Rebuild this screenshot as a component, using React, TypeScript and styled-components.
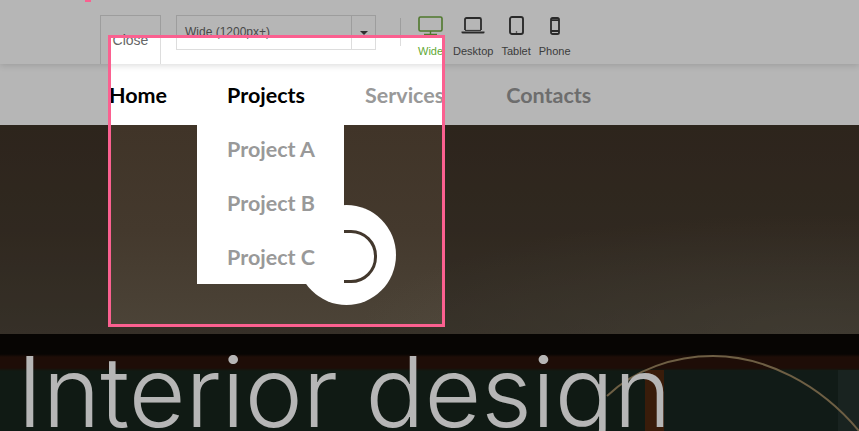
import { FC } from "react";
import styled, { createGlobalStyle } from "styled-components";

const GlobalStyle = createGlobalStyle`
  html, body {
    margin: 0;
    padding: 0;
    height: 100%;
    overflow: hidden;
    background: #fff;
  }
`;

const Page = styled.div`
  position: relative;
  display: flex;
  flex-direction: column;
  width: 859px;
  height: 431px;
  overflow: hidden;
`;

const Toolbar = styled.div`
  position: relative;
  z-index: 3;
  display: flex;
  align-items: flex-start;
  flex: 0 0 64px;
  padding-left: 100px;
  box-sizing: border-box;
  background: #fff;
  box-shadow: 0 1px 7px rgba(0, 0, 0, 0.16);
  font-family: "Liberation Sans", Arial, sans-serif;
`;

const CloseBtn = styled.button`
  width: 61px;
  height: 49px;
  margin: 15px 15px 0 0;
  padding: 0 0 1px;
  border: 1px solid #ddd;
  border-bottom: none;
  background: transparent;
  color: #666;
  font: 14px "Liberation Sans", Arial, sans-serif;
`;

const SizeSelect = styled.div`
  display: flex;
  width: 200px;
  height: 35px;
  margin-top: 15px;
  box-sizing: border-box;
  border: 1px solid #ddd;
`;

const SizeValue = styled.div`
  flex: 1;
  padding: 9px 0 0 8px;
  color: #666;
  font-size: 12px;
  line-height: 14px;
`;

const SizeArrow = styled.div`
  display: flex;
  align-items: center;
  justify-content: center;
  flex: 0 0 23px;
  border-left: 1px solid #ddd;

  &:after {
    content: "";
    margin-top: 1px;
    border-style: solid;
    border-width: 4px 4px 0;
    border-color: #444 transparent transparent;
  }
`;

const Divider = styled.div`
  width: 1px;
  height: 28px;
  margin: 18px 17px 0 24px;
  background: #ddd;
`;

const DeviceList = styled.div`
  display: flex;
  gap: 8px;
`;

const Device = styled.div<{ $active?: boolean; $gapRight?: number }>`
  display: flex;
  flex-direction: column;
  align-items: center;
  padding-top: 16px;
  margin-right: ${(p) => p.$gapRight || 0}px;
  color: ${(p) => (p.$active ? "#5fa935" : "#555")};
  font-size: 11px;
  line-height: 13px;

  svg {
    display: block;
    height: 20px;
    margin-bottom: 9px;
    color: ${(p) => (p.$active ? "#6fa83f" : "#3c3c3c")};
  }
`;

const Nav = styled.nav`
  position: relative;
  z-index: 2;
  display: flex;
  flex: 0 0 61px;
  padding-left: 79px;
  background: #fff;
  font-family: Lato, "Liberation Sans", sans-serif;
  font-weight: 700;
  font-size: 21.5px;
`;

const NavItem = styled.div<{ $active?: boolean; $gapRight?: number }>`
  position: relative;
  display: flex;
  align-items: center;
  padding: 1px 30px 0;
  margin-right: ${(p) => p.$gapRight || 0}px;
  color: ${(p) => (p.$active ? "#000" : "#999")};
`;

const Dropdown = styled.div`
  position: absolute;
  left: 0;
  top: calc(100% - 3px);
  width: 147px;
  background: #fff;
`;

const DropdownItem = styled.div`
  height: 54px;
  padding-left: 30px;
  color: #999;
  line-height: 54px;
  white-space: nowrap;
`;

const Hero = styled.section`
  position: relative;
  z-index: 1;
  display: flex;
  flex-direction: column;
  flex: 1;
  overflow: hidden;
`;

const HeroWall = styled.div`
  flex: 0 0 209px;
  background:
    radial-gradient(ellipse 460px 120px at 95% 100%, rgba(110, 105, 90, 0.4), transparent),
    linear-gradient(180deg, #403428 0%, #44392d 50%, #4c4438 100%);
`;

const HeroWindow = styled.div`
  position: relative;
  flex: 1;
  padding: 8px 0 0 17px;
  background: linear-gradient(
    180deg,
    #0a0705 0,
    #0a0705 20px,
    #2a130a 23px,
    #2a130a 34px,
    #17251c 37px,
    #17251c 100%
  );
`;

const HeroScenery = styled.svg`
  position: absolute;
  left: 0;
  top: 0;
`;

const Heading = styled.h1`
  position: relative;
  margin: 0;
  color: #fff;
  font-family: Inter, Lato, "Liberation Sans", sans-serif;
  font-weight: 300;
  font-size: 98px;
  line-height: 100px;
  white-space: nowrap;
`;

const HandleCircle = styled.div`
  position: absolute;
  left: 297px;
  top: 80px;
  display: flex;
  align-items: center;
  justify-content: center;
  width: 99px;
  height: 100px;
  border-radius: 50%;
  background: #fff;
`;

const HandleRing = styled.div`
  width: 60px;
  height: 53px;
  margin: 3px 0 0 1px;
  box-sizing: border-box;
  border: 3px solid #43382d;
  border-radius: 26px;
`;

const Highlight = styled.div`
  position: absolute;
  z-index: 5;
  left: 108px;
  top: 35px;
  width: 337px;
  height: 292px;
  box-sizing: border-box;
  border: 3px solid #fb6090;
  box-shadow: 0 0 0 1200px rgba(0, 0, 0, 0.286);
`;

const PinkMark = styled.div`
  position: absolute;
  z-index: 6;
  left: 85px;
  top: 0;
  width: 6px;
  height: 2px;
  background: #fb6090;
`;

const MonitorIcon: FC = () => (
  <svg width="25" height="20" viewBox="0 0 25 20" fill="none" stroke="currentColor">
    <rect x="1" y="1" width="23" height="14" rx="1.5" strokeWidth="1.6" />
    <path d="M12.5 15v3M6 18.5h13" strokeWidth="1.4" />
  </svg>
);

const LaptopIcon: FC = () => (
  <svg width="24" height="20" viewBox="0 0 24 20" fill="none" stroke="currentColor">
    <path d="M4 14V3.5C4 2.6 4.6 2 5.5 2h13c.9 0 1.5.6 1.5 1.5V14" strokeWidth="1.8" />
    <path d="M0.5 15.6h23v1c0 .5-.5.9-1 .9h-21c-.5 0-1-.4-1-.9z" fill="currentColor" stroke="none" />
    <path d="M4 14.4h16" strokeWidth="1" />
  </svg>
);

const TabletIcon: FC = () => (
  <svg width="15" height="20" viewBox="0 0 15 20" fill="none" stroke="currentColor">
    <rect x="1" y="1" width="13" height="17" rx="2" strokeWidth="1.9" />
    <circle cx="7.5" cy="16" r="0.8" fill="currentColor" stroke="none" />
  </svg>
);

const PhoneIcon: FC = () => (
  <svg width="10" height="20" viewBox="0 0 10 20" fill="none" stroke="currentColor">
    <rect x="1" y="2" width="8" height="16" rx="1.6" strokeWidth="1.8" />
    <path d="M1 4.2h8M1 15h8" strokeWidth="1.8" />
  </svg>
);

const App: FC = () => {
  return (
    <Page>
      <GlobalStyle />
      <Toolbar>
        <CloseBtn>Close</CloseBtn>
        <SizeSelect>
          <SizeValue>Wide (1200px+)</SizeValue>
          <SizeArrow />
        </SizeSelect>
        <Divider />
        <DeviceList>
          <Device $active $gapRight={2}>
            <MonitorIcon />
            Wide
          </Device>
          <Device>
            <LaptopIcon />
            Desktop
          </Device>
          <Device>
            <TabletIcon />
            Tablet
          </Device>
          <Device>
            <PhoneIcon />
            Phone
          </Device>
        </DeviceList>
      </Toolbar>
      <Nav>
        <NavItem $active>Home</NavItem>
        <NavItem $active>
          Projects
          <Dropdown>
            <DropdownItem>Project A</DropdownItem>
            <DropdownItem>Project B</DropdownItem>
            <DropdownItem>Project C</DropdownItem>
          </Dropdown>
        </NavItem>
        <NavItem $gapRight={2}>Services</NavItem>
        <NavItem>Contacts</NavItem>
      </Nav>
      <Hero>
        <HeroWall />
        <HeroWindow>
          <HeroScenery width="859" height="97" viewBox="0 0 859 97" fill="none">
            <rect x="645" y="36" width="19" height="61" fill="#50280f" />
            <rect x="664" y="36" width="195" height="61" fill="#1a2a24" opacity="0.6" />
            <rect x="838" y="36" width="21" height="61" fill="#2b3a36" opacity="0.6" />
            <path d="M607 62C635 35 675 22 713 22C765 22 820 50 859 97" stroke="#9a8560" strokeWidth="2" />
          </HeroScenery>
          <Heading>Interior design</Heading>
        </HeroWindow>
        <HandleCircle>
          <HandleRing />
        </HandleCircle>
      </Hero>
      <Highlight />
      <PinkMark />
    </Page>
  );
};

export default App;
